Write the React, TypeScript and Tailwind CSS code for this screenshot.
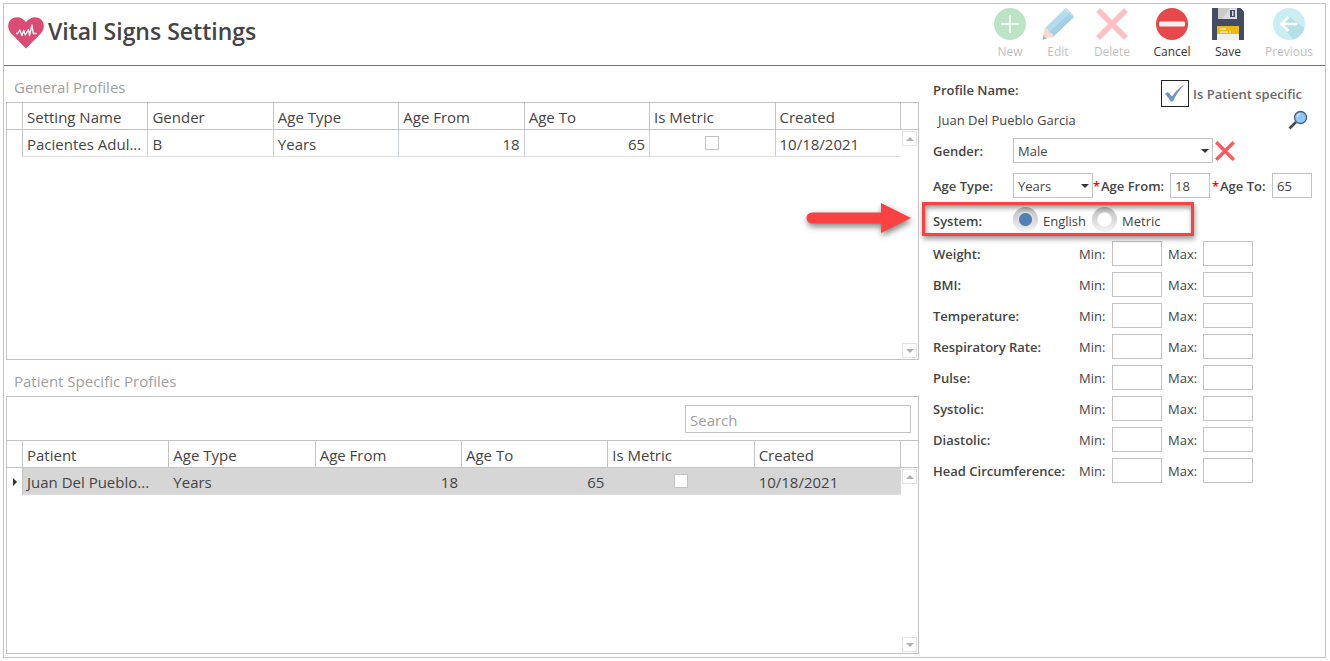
import { useState } from "react";
import type { ReactNode } from "react";
import clsx from "clsx";

const measurements = [
  "Weight",
  "BMI",
  "Temperature",
  "Respiratory Rate",
  "Pulse",
  "Systolic",
  "Diastolic",
  "Head Circumference",
];

function HeartIcon() {
  return (
    <svg viewBox="0 0 36 32" className="h-8 w-9" aria-hidden="true">
      <path
        d="M18 31.5 3.2 16.4C-.9 12-.7 5.600 3 2.400 7.200-1.200 14-.6 18 5c4-5.600 10.800-6.200 15-2.600 3.700 3.200 3.900 9.600-.2 14z"
        fill="#db4c74"
      />
      <path
        d="M8 16.500h1.700l2-3.500 2.300 5.500 1.800-5 1.500 4.500 3.200-5.500 1 6 2.500-10.500 1.200 8.500h3.600"
        fill="none"
        stroke="#fff"
        strokeWidth="1.300"
        strokeLinejoin="round"
      />
    </svg>
  );
}

function NewIcon() {
  return (
    <svg viewBox="0 0 32 32" className="size-8" aria-hidden="true">
      <circle cx="16" cy="16" r="16" fill="#bce3c6" />
      <path d="M16 7v18M7 16h18" stroke="#fff" strokeWidth="1.600" />
    </svg>
  );
}

function EditIcon() {
  return (
    <svg viewBox="0 0 32 32" className="size-8" aria-hidden="true">
      <path d="M22.500 1 31 9.500q1.500-1.500 0-3l-5.500-5.500q-1.500-1.300-3 0z" fill="#c4e1ef" />
      <path d="M22.500 1 31.500 9.500 11 29 2.500 20.500z" fill="#b3dcec" />
      <path d="M27 5.500 31.500 9.500 11 29 7 24.500z" fill="#a5d0e3" />
      <path d="M2.500 20.500 5.500 20.800 7 24.500 10.500 25.500 11 29 .5 31.500z" fill="#fbdcd0" />
      <path d="M1.500 27.500 4.500 30.600.3 31.700z" fill="#9cb9cd" />
    </svg>
  );
}

function CancelIcon() {
  return (
    <svg viewBox="0 0 32 32" className="size-8" aria-hidden="true">
      <circle cx="16" cy="16" r="16" fill="#e9484b" />
      <rect x="3" y="13.500" width="26" height="5" rx="1.500" fill="#f4f1f1" />
    </svg>
  );
}

function SaveIcon() {
  return (
    <svg viewBox="0 0 32 32" className="size-8" aria-hidden="true">
      <path d="M0 0h28.500L32 3.500V32H0z" fill="#434c63" />
      <rect x="6" width="19" height="11" fill="#dcdcdc" />
      <path d="M6 0h12L10 11H6z" fill="#cbcbcb" />
      <rect x="18" y="2" width="5" height="7" fill="#434c63" />
      <rect x="20" y="3" width="1.500" height="5" fill="#dcdcdc" />
      <rect x="5" y="18" width="22" height="14" fill="#efefef" />
      <rect x="5" y="18" width="22" height="8" fill="#ecb913" />
      <path d="M8 21h6M8 24h8M17 24h2" stroke="#fff" strokeWidth="1.200" />
    </svg>
  );
}

function PreviousIcon() {
  return (
    <svg viewBox="0 0 32 32" className="size-8" aria-hidden="true">
      <circle cx="16" cy="16" r="16" fill="#c9edf0" />
      <path d="M15 8l16.500 12A16 16 0 0 1 20 31.500L8 16z" fill="#b5dfe6" />
      <path d="M24.500 16H9M15.500 9 8.500 16l7 7" fill="none" stroke="#fff" strokeWidth="2.600" />
    </svg>
  );
}

function CrossIcon({ className }: { className: string }) {
  return (
    <svg viewBox="0 0 32 32" className={className} aria-hidden="true">
      <path d="M2 2 30 30M30 2 2 30" stroke="currentColor" strokeWidth="5.500" />
    </svg>
  );
}

function SearchIcon() {
  return (
    <svg viewBox="0 0 20 20" className="size-5" aria-hidden="true">
      <path d="M1.500 18.500 8 12" stroke="#4a4a4a" strokeWidth="2.600" />
      <circle cx="12.500" cy="7.500" r="6" fill="#8fc6fb" stroke="#4c5f78" strokeWidth="1.300" />
      <path d="M9 7a4 4 0 0 1 3-3.200" stroke="#d6ebff" strokeWidth="1.200" fill="none" />
    </svg>
  );
}

interface ToolButtonProps {
  label: string;
  icon: ReactNode;
  className: string;
  disabled?: boolean;
}

function ToolButton({ label, icon, className, disabled }: ToolButtonProps) {
  return (
    <button
      type="button"
      disabled={disabled}
      className={clsx(
        "flex flex-col items-center gap-1 pt-1 text-[12px] leading-4",
        disabled ? "text-[#c0c0c0]" : "text-[#333]",
        className
      )}
    >
      {icon}
      {label}
    </button>
  );
}

function ScrollBar() {
  return (
    <div className="flex w-[17px] shrink-0 flex-col items-start pb-px">
      <div className="h-[27px] w-full border-b border-[#c3c3c3]" />
      <button
        type="button"
        aria-label="Scroll up"
        className="mt-px ml-px flex size-[15px] items-center justify-center border border-[#e2e2e2]"
      >
        <svg viewBox="0 0 8 4" className="h-1 w-2">
          <path d="M0 4 4 0l4 4z" fill="#b0b0b0" />
        </svg>
      </button>
      <div className="flex-1" />
      <button
        type="button"
        aria-label="Scroll down"
        className="ml-px flex size-[15px] items-center justify-center border border-[#e2e2e2]"
      >
        <svg viewBox="0 0 8 4" className="h-1 w-2">
          <path d="M0 0h8L4 4z" fill="#b0b0b0" />
        </svg>
      </button>
    </div>
  );
}

interface GridProps {
  label: string;
  columns: string[];
  row: string[];
  selected?: boolean;
}

function Grid({ label, columns, row, selected }: GridProps) {
  return (
    <div className="flex min-h-0 flex-1">
      <div className="min-w-0 flex-1">
        <table
          aria-label={label}
          className="w-full table-fixed border-separate border-spacing-0 text-[15px] leading-5"
        >
          <thead>
            <tr className="h-[27px]">
              <th className="w-4 border-r border-b border-[#c3c3c3]" />
              {columns.map((column) => (
                <th
                  key={column}
                  scope="col"
                  className="truncate border-r border-b border-[#c3c3c3] px-1 pt-0.5 text-left font-normal"
                >
                  {column}
                </th>
              ))}
            </tr>
          </thead>
          <tbody>
            <tr className="h-[27px]">
              <td className="border-r border-[#c3c3c3]">
                {selected && (
                  <svg viewBox="0 0 4 8" className="mr-[5px] ml-auto h-2 w-1">
                    <path d="M0 0 4 4 0 8z" fill="#333" />
                  </svg>
                )}
              </td>
              {columns.map((column, i) => (
                <td
                  key={column}
                  className={clsx(
                    "border-b px-1 pt-0.5 whitespace-nowrap",
                    selected ? "border-[#dedede] bg-[#d6d6d6]" : "border-[#dedede]",
                    !selected && i < columns.length - 1 && "border-r border-r-[#c8cdd6]",
                    (column === "Age From" || column === "Age To") && "text-right"
                  )}
                >
                  {column === "Is Metric" ? (
                    <input
                      type="checkbox"
                      aria-label="Is Metric"
                      className="mx-auto mb-0.5 block size-[14px] appearance-none border border-[#c3c3c3] bg-white"
                    />
                  ) : (
                    row[i]
                  )}
                </td>
              ))}
            </tr>
          </tbody>
        </table>
      </div>
      <ScrollBar />
    </div>
  );
}

function Select({ id, options, className }: { id: string; options: string[]; className: string }) {
  return (
    <div className={clsx("relative", className)}>
      <select
        id={id}
        className="h-[25px] w-full appearance-none border border-[#c3c3c3] bg-white px-1 outline-none"
      >
        {options.map((option) => (
          <option key={option}>{option}</option>
        ))}
      </select>
      <svg viewBox="0 0 8 4" className="pointer-events-none absolute top-[11px] right-1 h-1 w-2">
        <path d="M0 0h8L4 4z" fill="#333" />
      </svg>
    </div>
  );
}

function Header() {
  return (
    <header className="flex h-[62px] items-start justify-between border-b border-[#4f7db3] pr-px pl-1">
      <div className="flex items-start gap-1 pt-[13px]">
        <HeartIcon />
        <h1 className="text-[23px] leading-7 font-semibold">Vital Signs Settings</h1>
      </div>
      <div className="flex">
        <ToolButton label="New" icon={<NewIcon />} className="w-12" disabled />
        <ToolButton label="Edit" icon={<EditIcon />} className="w-12" disabled />
        <ToolButton
          label="Delete"
          icon={<CrossIcon className="size-8 text-[#ffc0c4]" />}
          className="w-[60px]"
          disabled
        />
        <ToolButton label="Cancel" icon={<CancelIcon />} className="w-[60px]" />
        <ToolButton label="Save" icon={<SaveIcon />} className="w-[52px]" />
        <ToolButton label="Previous" icon={<PreviousIcon />} className="w-[70px]" disabled />
      </div>
    </header>
  );
}

function ProfileForm() {
  const [system, setSystem] = useState("English");

  return (
    <form className="w-[406px] shrink-0 pt-3 pr-3 pl-[14px] text-[13px] leading-5">
      <div className="flex h-[30px] items-start justify-between pr-[11px]">
        <span className="pt-0.5 font-semibold">Profile Name:</span>
        <label className="flex items-center gap-1 pt-0.5 font-semibold text-[#6a6a6a]">
          <span className="relative">
            <input
              type="checkbox"
              defaultChecked
              className="peer block h-[27px] w-7 appearance-none border border-[#222] bg-white"
            />
            <svg
              viewBox="0 0 20 18"
              className="pointer-events-none absolute top-1 left-1 hidden h-[18px] w-5 peer-checked:block"
            >
              <path d="M0 9.500 3 8l4 4.500Q12 5 20 0 12 8 8 17.500H6z" fill="#7095c5" />
            </svg>
          </span>
          Is Patient specific
        </label>
      </div>

      <div className="mb-[6px] flex h-6 items-center justify-between pr-[5px] pl-[5px]">
        <span>Juan Del Pueblo Garcia</span>
        <button type="button" aria-label="Find patient">
          <SearchIcon />
        </button>
      </div>

      <div className="mb-[10px] flex h-[25px] items-center">
        <label htmlFor="gender" className="w-20 font-semibold">
          Gender:
        </label>
        <Select id="gender" options={["Male", "Female", "Both"]} className="w-[200px]" />
        <button type="button" aria-label="Clear gender" className="ml-0.5">
          <CrossIcon className="size-5 text-[#fb5a5f]" />
        </button>
      </div>

      <div className="flex h-[25px] items-center">
        <label htmlFor="age-type" className="w-20 shrink-0 font-semibold">
          Age Type:
        </label>
        <Select id="age-type" options={["Years", "Months", "Days"]} className="w-20 shrink-0" />
        <label
          htmlFor="age-from"
          className="flex w-[77px] shrink-0 font-semibold whitespace-nowrap"
        >
          <span className="w-2 text-[#f00]">*</span>Age From:
        </label>
        <input
          id="age-from"
          defaultValue="18"
          className="h-[25px] w-10 shrink-0 border border-[#c3c3c3] px-1 outline-none"
        />
        <label
          htmlFor="age-to"
          className="flex w-[62px] shrink-0 pl-0.5 font-semibold whitespace-nowrap"
        >
          <span className="w-2 text-[#f00]">*</span>Age To:
        </label>
        <input
          id="age-to"
          defaultValue="65"
          className="h-[25px] w-10 shrink-0 border border-[#c3c3c3] px-1 outline-none"
        />
      </div>

      <div className="relative flex h-[43px] items-center">
        <span className="w-20 pt-0.5 font-semibold">System:</span>
        {["English", "Metric"].map((name) => (
          <label key={name} className="flex w-[79px] items-center gap-[5px]">
            <input
              type="radio"
              name="system"
              checked={system === name}
              onChange={() => setSystem(name)}
              className="size-[25px] shrink-0 appearance-none rounded-full bg-[radial-gradient(circle,#fff_6px,transparent_8px),linear-gradient(#bdbdbd,#f4f4f4)] checked:bg-[radial-gradient(circle,#5280b6_6px,#dedede_7px,transparent_9px),linear-gradient(#bdbdbd,#f4f4f4)]"
            />
            <span className="pt-0.5">{name}</span>
          </label>
        ))}
        {/* callout around the unit system */}
        <div className="pointer-events-none absolute top-1 -left-[11px] h-[34px] w-[272px] border-[3px] border-[#fb4141] shadow-[1px_3px_5px_rgba(0,0,0,0.4),inset_1px_3px_5px_rgba(0,0,0,0.4)]" />
        <svg
          viewBox="0 0 112 44"
          className="pointer-events-none absolute top-0 -left-[130px] h-11 w-28 drop-shadow-[1px_3px_3px_rgba(0,0,0,0.5)]"
        >
          <path d="M9 14.500h69V5l30 15-30 15v-9.500H9a5.500 5.500 0 0 1 0-11z" fill="#fb4141" />
        </svg>
      </div>

      <div className="flex flex-col gap-[6px]">
        {measurements.map((name) => (
          <div key={name} className="flex h-[25px] items-center">
            <span className="w-[146px] font-semibold">{name}:</span>
            <label className="flex items-center">
              <span className="w-[33px]">Min:</span>
              <input
                aria-label={`${name} minimum`}
                className="h-[25px] w-[50px] border border-[#c3c3c3] px-1 outline-none"
              />
            </label>
            <label className="ml-[6px] flex items-center">
              <span className="w-[35px]">Max:</span>
              <input
                aria-label={`${name} maximum`}
                className="h-[25px] w-[50px] border border-[#c3c3c3] px-1 outline-none"
              />
            </label>
          </div>
        ))}
      </div>
    </form>
  );
}

export default function App() {
  return (
    <div className="flex min-h-screen bg-white p-[3px] pr-1 font-['Open_Sans','Noto_Sans',sans-serif] text-[#444]">
      <div className="flex min-w-0 flex-1 flex-col border border-[#c3c3c3]">
        <Header />
        <main className="flex flex-1">
          <div className="flex min-w-0 flex-1 flex-col pb-[3px] pl-0.5">
            <section className="flex flex-1 flex-col">
              <h2 className="h-9 pt-[11px] pl-2 text-[15px] leading-5 text-[#a0a0a0]">
                General Profiles
              </h2>
              <div className="flex flex-1 flex-col border border-[#c3c3c3]">
                <Grid
                  label="General Profiles"
                  columns={[
                    "Setting Name",
                    "Gender",
                    "Age Type",
                    "Age From",
                    "Age To",
                    "Is Metric",
                    "Created",
                  ]}
                  row={["Pacientes Adul...", "B", "Years", "18", "65", "", "10/18/2021"]}
                />
              </div>
            </section>
            <section className="flex flex-1 flex-col">
              <h2 className="h-9 pt-[11px] pl-2 text-[15px] leading-5 text-[#a0a0a0]">
                Patient Specific Profiles
              </h2>
              <div className="flex flex-1 flex-col border border-[#c3c3c3]">
                <div className="flex h-11 items-start justify-end border-b border-[#c3c3c3] pt-2 pr-[7px]">
                  <input
                    type="search"
                    placeholder="Search"
                    aria-label="Search profiles"
                    className="h-7 w-[226px] border border-[#c3c3c3] px-1 pt-0.5 text-[15px] outline-none placeholder:text-[#a0a0a0]"
                  />
                </div>
                <Grid
                  label="Patient Specific Profiles"
                  columns={["Patient", "Age Type", "Age From", "Age To", "Is Metric", "Created"]}
                  row={["Juan Del Pueblo...", "Years", "18", "65", "", "10/18/2021"]}
                  selected
                />
              </div>
            </section>
          </div>
          <ProfileForm />
        </main>
      </div>
    </div>
  );
}
